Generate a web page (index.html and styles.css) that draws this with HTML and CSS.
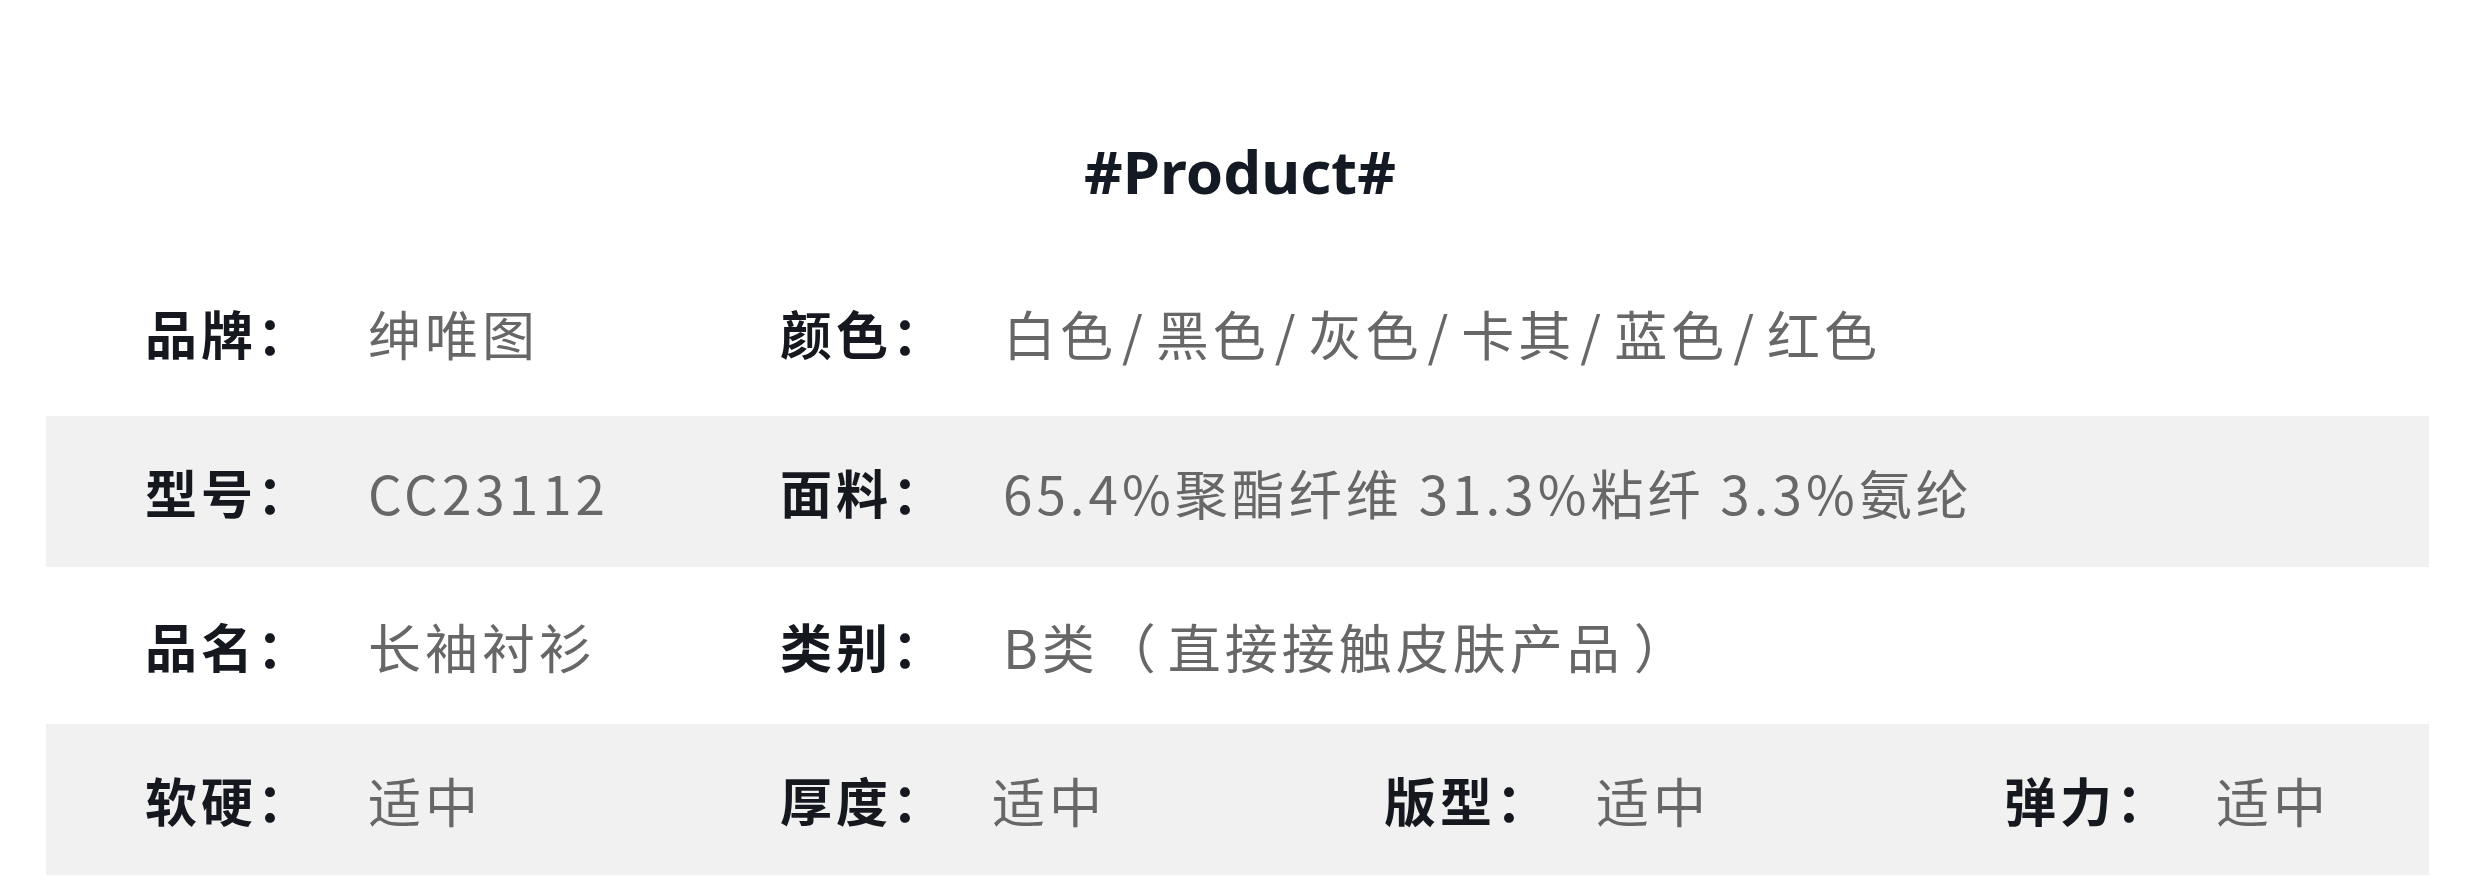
FILE: index.html
```html
<!DOCTYPE html>
<html lang="zh-CN">
<head>
<meta charset="utf-8">
<title>#Product#</title>
<link rel="stylesheet" href="styles.css">
</head>
<body>
<div class="sheet">
  <header class="head"><h1 class="title">#Product#</h1></header>
  <div class="table">
    <div class="row lead">
      <div class="pair col-a"><span class="label">品牌：</span><span class="value">绅唯图</span></div>
      <div class="pair col-b"><span class="label">颜色：</span><span class="value">白色<span class="sep">/</span>黑色<span class="sep">/</span>灰色<span class="sep">/</span>卡其<span class="sep">/</span>蓝色<span class="sep">/</span>红色</span></div>
    </div>
    <div class="row shaded">
      <div class="pair col-a"><span class="label">型号：</span><span class="value">CC23112</span></div>
      <div class="pair col-b"><span class="label">面料：</span><span class="value">65.4%聚酯纤维 31.3%粘纤 3.3%氨纶</span></div>
    </div>
    <div class="row tall">
      <div class="pair col-a"><span class="label">品名：</span><span class="value">长袖衬衫</span></div>
      <div class="pair col-b"><span class="label">类别：</span><span class="value">B类<span class="paren-open">（</span>直接接触皮肤产品<span class="paren-close">）</span></span></div>
    </div>
    <div class="row shaded">
      <div class="pair col-a"><span class="label">软硬：</span><span class="value">适中</span></div>
      <div class="pair col-c"><span class="label short">厚度：</span><span class="value">适中</span></div>
      <div class="pair col-d"><span class="label short">版型：</span><span class="value">适中</span></div>
      <div class="pair"><span class="label short">弹力：</span><span class="value">适中</span></div>
    </div>
  </div>
</div>
</body>
</html>
```

FILE: styles.css
```css
html, body {
  margin: 0;
  padding: 0;
  background: #ffffff;
}

.sheet {
  width: 2480px;
  height: 892px;
  font-family: "Noto Sans CJK SC", "Noto Sans", sans-serif;
}

.head {
  height: 265px;
  box-sizing: border-box;
  padding-top: 135px;
  display: flex;
  justify-content: center;
}

.title {
  margin: 0;
  font-family: "Noto Sans", "Noto Sans CJK SC", sans-serif;
  font-weight: 700;
  font-size: 60px;
  line-height: 72px;
  color: #141a24;
}

.table {
  margin: 0 51px 0 46px;
}

.row {
  box-sizing: border-box;
  height: 151px;
  display: flex;
  align-items: center;
  padding-left: 99px;
}

.row.lead {
  padding-bottom: 16px;
}

.row.tall {
  height: 157px;
}

.row.shaded {
  background: #f1f1f1;
}

.pair {
  display: flex;
  align-items: center;
}

.col-a { width: 635px; }
.col-b { width: auto; }
.col-c { width: 604px; }
.col-d { width: 620px; }

.label {
  width: 223px;
  flex: none;
  font-weight: 700;
  font-size: 52px;
  color: #15181f;
  letter-spacing: 4px;
}

.label.short {
  width: 212px;
}

.value {
  font-weight: 400;
  font-size: 53px;
  color: #676767;
  letter-spacing: 4px;
}

.sep {
  padding: 0 9px 0 5px;
}

.paren-open {
  padding: 0 8px 0 4px;
}

.paren-close {
  padding: 0 0 0 10px;
}
```
